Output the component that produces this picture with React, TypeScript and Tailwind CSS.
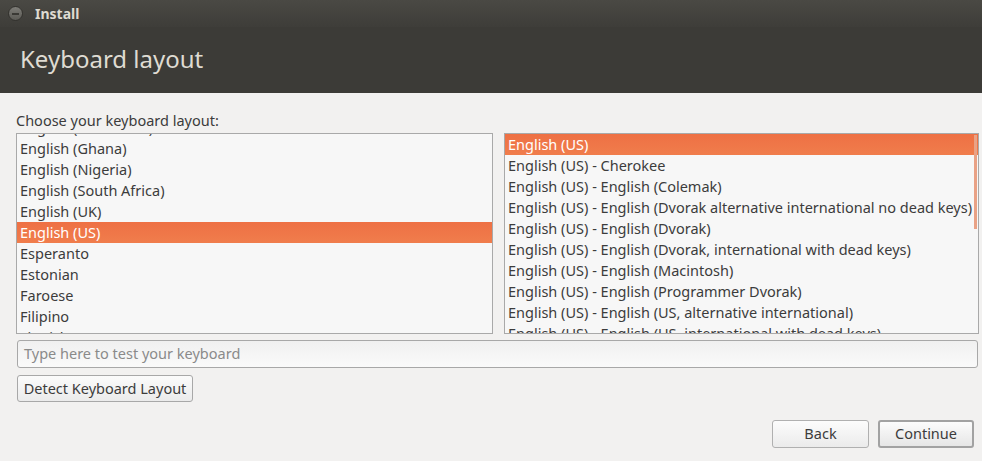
import React from "react";

const leftItems = [
  "English (Cameroon)",
  "English (Ghana)",
  "English (Nigeria)",
  "English (South Africa)",
  "English (UK)",
  "English (US)",
  "Esperanto",
  "Estonian",
  "Faroese",
  "Filipino",
  "Finnish",
];

const rightItems = [
  "English (US)",
  "English (US) - Cherokee",
  "English (US) - English (Colemak)",
  "English (US) - English (Dvorak alternative international no dead keys)",
  "English (US) - English (Dvorak)",
  "English (US) - English (Dvorak, international with dead keys)",
  "English (US) - English (Macintosh)",
  "English (US) - English (Programmer Dvorak)",
  "English (US) - English (US, alternative international)",
  "English (US) - English (US, international with dead keys)",
];

function Row({ text, selected }: { text: string; selected: boolean }) {
  return (
    <div
      className={
        selected
          ? "h-[21px] shrink-0 flex items-center pl-[3px] whitespace-nowrap text-white bg-gradient-to-b from-[#ee7044] to-[#f07d4c]"
          : "h-[21px] shrink-0 flex items-center pl-[3px] whitespace-nowrap text-[#3c3c3c]"
      }
    >
      {text}
    </div>
  );
}

export default function App() {
  return (
    <div
      className="w-[982px] h-[461px] overflow-hidden bg-[#f2f1f0] flex flex-col text-[14.5px]"
      style={{ fontFamily: '"Noto Sans", "Open Sans", sans-serif' }}
    >
      {/* title bar */}
      <div className="h-[27px] shrink-0 flex items-center bg-gradient-to-b from-[#4a4944] to-[#3e3d39] pl-[8px]">
        <div className="w-[15px] h-[15px] rounded-full bg-gradient-to-b from-[#7d7c77] to-[#5c5b56] border border-[#33322e] flex items-center justify-center">
          <div className="w-[7px] h-[2px] bg-[#3a3935]" />
        </div>
        <span className="ml-[12px] text-[#dfdbd2] font-bold text-[14px] leading-none">Install</span>
      </div>
      {/* header */}
      <div className="h-[66px] shrink-0 bg-[#3c3b37] flex items-center pl-[20px]">
        <span className="text-[#dfdbd2] text-[24px] leading-none mt-[-2px]">Keyboard layout</span>
      </div>
      {/* body */}
      <div className="flex flex-col pl-[16px] pt-[17px]">
        <div className="h-[20px] text-[#3c3c3c] leading-none flex items-center">Choose your keyboard layout:</div>
        <div className="flex mt-[3px]">
          <div className="w-[477px] h-[201px] border border-[#a9a9a9] bg-[#f7f7f7] overflow-hidden">
            <div className="flex flex-col mt-[-17px]">
              {leftItems.map((t) => (
                <Row key={t} text={t} selected={t === "English (US)"} />
              ))}
            </div>
          </div>
          <div className="ml-[11px] w-[475px] h-[201px] border border-[#a9a9a9] bg-[#f7f7f7] overflow-hidden relative">
            <div className="flex flex-col">
              {rightItems.map((t, i) => (
                <Row key={t} text={t} selected={i === 0} />
              ))}
            </div>
            <div className="absolute right-[1px] top-[1px] w-[3px] h-[94px] bg-[#e9a286]" />
          </div>
        </div>
        <div className="mt-[6px] ml-[1px] w-[961px] h-[28px] rounded-[3px] border border-[#a8a8a8] bg-gradient-to-b from-[#f0f0f0] to-[#fafafa] flex items-center pl-[6px] text-[#8a8a8a]">
          Type here to test your keyboard
        </div>
        <div className="mt-[7px] ml-[1px] w-[176px] h-[27px] rounded-[3px] border border-[#a8a8a8] bg-gradient-to-b from-[#fbfbfb] to-[#ebebeb] flex items-center justify-center text-[#3c3c3c]">
          Detect Keyboard Layout
        </div>
        <div className="flex justify-end pr-[8px] mt-[18px]">
          <div className="w-[97px] h-[28px] rounded-[3px] border border-[#b0b0b0] bg-gradient-to-b from-[#fcfcfc] to-[#ebebeb] flex items-center justify-center text-[#3c3c3c]">
            Back
          </div>
          <div className="ml-[9px] w-[96px] h-[28px] rounded-[3px] border-2 border-[#a2a2a2] bg-gradient-to-b from-[#fcfcfc] to-[#e6e6e6] flex items-center justify-center text-[#3c3c3c]">
            Continue
          </div>
        </div>
      </div>
    </div>
  );
}
